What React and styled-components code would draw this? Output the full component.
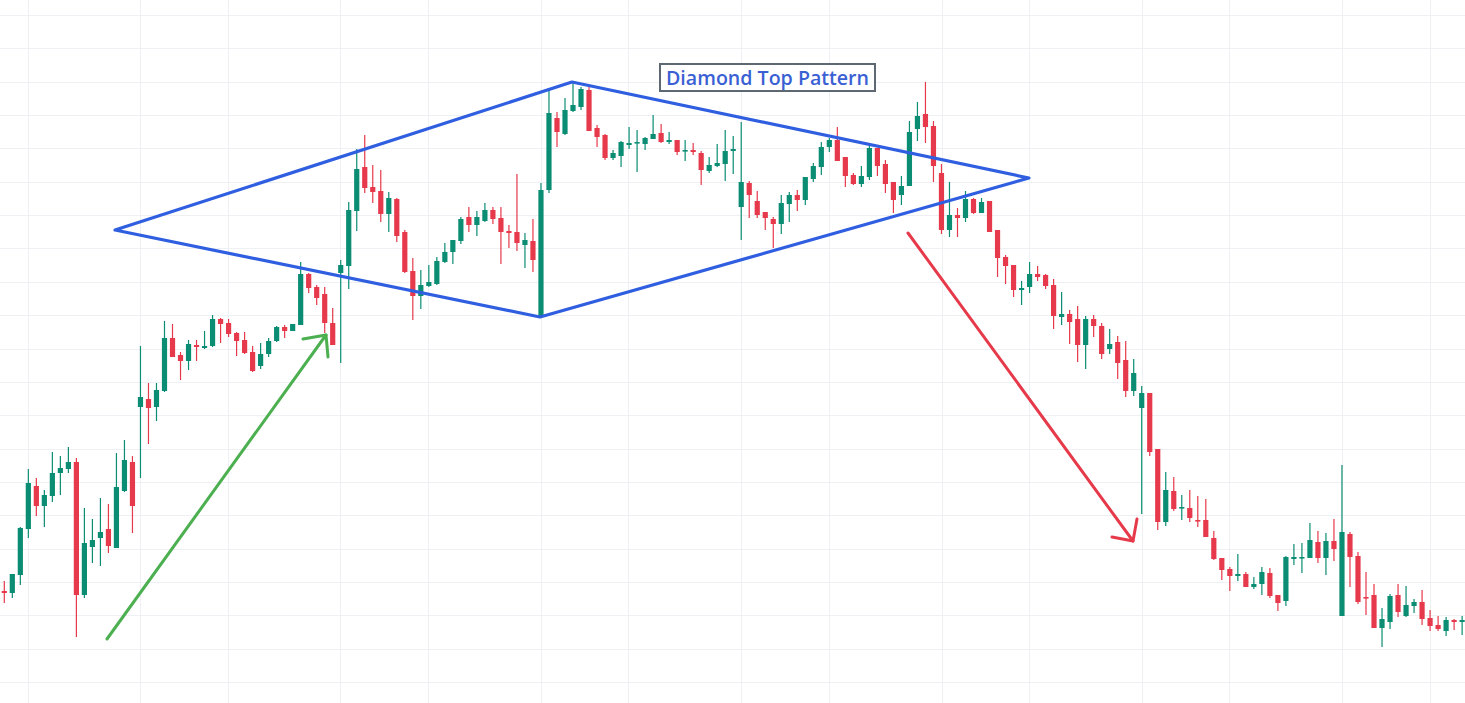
import React from "react";
import styled, { createGlobalStyle } from "styled-components";

const GlobalStyle = createGlobalStyle`
  html, body {
    margin: 0;
    padding: 0;
    background: #ffffff;
    overflow: hidden;
  }
`;

const W = 1465;
const H = 703;
const STEP = 8.01;
const X0 = 4.3;

const UP = "#0b8d74";
const DOWN = "#e6394b";
const GRID = "#eef0f4";
const PATTERN = "#2f5fe0";

// [colour, wickTop, bodyTop, bodyBottom, wickBottom] in screen px
const candles = [
  ["r", 581, 591, 593, 603], ["g", 574, 574, 593, 598], ["g", 527, 528, 575, 585],
  ["g", 469, 483, 529, 538], ["r", 478, 486, 506, 516], ["g", 490, 495, 506, 527],
  ["g", 452, 473, 496, 502], ["g", 456, 468, 473, 495], ["g", 447, 462, 469, 473],
  ["r", 458, 462, 595, 637], ["g", 508, 543, 595, 598], ["g", 519, 540, 547, 563],
  ["g", 498, 532, 538, 566], ["r", 504, 529, 546, 553], ["g", 453, 487, 548, 548],
  ["g", 440, 460, 491, 492], ["r", 456, 462, 506, 533], ["g", 346, 397, 407, 478],
  ["r", 383, 399, 408, 444], ["g", 383, 390, 407, 421], ["g", 321, 338, 391, 392],
  ["r", 324, 338, 357, 357], ["r", 352, 355, 361, 380], ["g", 340, 344, 361, 370],
  ["r", 340, 345, 347, 361], ["g", 331, 346, 348, 349], ["g", 315, 319, 346, 347],
  ["r", 318, 319, 324, 343], ["r", 319, 323, 334, 337], ["r", 332, 333, 341, 356],
  ["r", 332, 340, 353, 354], ["r", 346, 352, 371, 372], ["g", 343, 354, 366, 369],
  ["g", 338, 341, 354, 357], ["g", 326, 327, 341, 342], ["r", 325, 327, 331, 338],
  ["g", 324, 324, 331, 331], ["g", 262, 274, 325, 325], ["r", 273, 274, 288, 293],
  ["r", 285, 287, 298, 305], ["r", 287, 294, 323, 333], ["r", 308, 323, 345, 345],
  ["g", 260, 265, 273, 363], ["g", 202, 210, 266, 289], ["g", 149, 169, 211, 231],
  ["r", 135, 167, 188, 193], ["r", 165, 187, 192, 203], ["r", 170, 191, 214, 222],
  ["g", 192, 198, 214, 232], ["r", 198, 199, 236, 242], ["r", 230, 232, 272, 273],
  ["r", 258, 271, 296, 320], ["g", 270, 285, 296, 309], ["g", 265, 282, 286, 287],
  ["g", 257, 261, 284, 285], ["g", 243, 252, 262, 263], ["g", 240, 240, 252, 264],
  ["g", 217, 219, 241, 244], ["r", 207, 217, 225, 232], ["g", 211, 217, 225, 236],
  ["g", 203, 210, 221, 222], ["r", 207, 210, 219, 224], ["r", 207, 218, 232, 264],
  ["r", 225, 231, 233, 248], ["r", 174, 232, 243, 251], ["g", 233, 240, 245, 268],
  ["r", 219, 241, 260, 272], ["g", 183, 190, 317, 317], ["g", 90, 113, 190, 193],
  ["r", 112, 118, 132, 147], ["g", 98, 110, 134, 135], ["g", 83, 105, 111, 112],
  ["g", 87, 89, 107, 110], ["r", 87, 90, 131, 131], ["r", 125, 128, 137, 147],
  ["r", 134, 135, 158, 160], ["g", 150, 153, 158, 160], ["g", 141, 142, 156, 167],
  ["g", 127, 143, 145, 149], ["g", 130, 142, 143, 172], ["g", 137, 138, 144, 150],
  ["g", 115, 134, 139, 139], ["r", 124, 133, 142, 143], ["g", 132, 140, 142, 144],
  ["r", 140, 140, 152, 155], ["g", 140, 150, 151, 161], ["r", 143, 150, 152, 155],
  ["r", 151, 153, 170, 185], ["g", 157, 165, 171, 173], ["g", 144, 163, 166, 167],
  ["g", 130, 151, 164, 181], ["g", 136, 149, 151, 174], ["g", 122, 182, 207, 240],
  ["r", 181, 183, 195, 218], ["r", 191, 201, 215, 218], ["r", 212, 212, 218, 230],
  ["r", 217, 219, 224, 248], ["g", 195, 203, 224, 234], ["g", 192, 195, 204, 222],
  ["r", 190, 195, 200, 211], ["g", 177, 177, 200, 205], ["g", 163, 166, 179, 182],
  ["g", 142, 147, 167, 175], ["g", 138, 140, 147, 152], ["r", 127, 140, 161, 161],
  ["r", 157, 157, 176, 187], ["r", 173, 175, 184, 185], ["g", 166, 176, 184, 187],
  ["g", 146, 148, 177, 180], ["r", 148, 148, 166, 176], ["r", 160, 164, 184, 193],
  ["r", 182, 182, 200, 213], ["g", 176, 186, 195, 205], ["g", 121, 132, 186, 186],
  ["g", 102, 116, 129, 141], ["r", 82, 114, 127, 143], ["r", 121, 126, 166, 182],
  ["r", 164, 173, 230, 234], ["g", 182, 215, 230, 237], ["r", 208, 215, 218, 237],
  ["g", 191, 199, 218, 222], ["r", 198, 199, 213, 214], ["g", 198, 202, 213, 213],
  ["r", 201, 201, 232, 232], ["r", 230, 230, 258, 277], ["r", 255, 257, 266, 284],
  ["r", 265, 265, 290, 297], ["g", 281, 288, 290, 305], ["g", 262, 274, 287, 293],
  ["r", 266, 274, 277, 281], ["r", 274, 275, 286, 289], ["r", 279, 285, 316, 329],
  ["g", 292, 314, 317, 325], ["r", 310, 314, 322, 344], ["r", 306, 319, 345, 362],
  ["g", 316, 319, 345, 369], ["r", 315, 319, 326, 337], ["r", 323, 326, 354, 359],
  ["g", 329, 344, 349, 354], ["r", 336, 342, 363, 379], ["r", 341, 360, 391, 397],
  ["g", 359, 373, 391, 396], ["g", 386, 393, 408, 514], ["r", 393, 393, 452, 456],
  ["r", 449, 449, 522, 530], ["g", 472, 490, 522, 526], ["r", 477, 491, 509, 511],
  ["g", 495, 507, 508, 520], ["r", 490, 508, 518, 522], ["r", 496, 520, 521, 527],
  ["r", 499, 520, 537, 537], ["r", 531, 538, 559, 560], ["r", 558, 558, 570, 580],
  ["r", 567, 569, 576, 591], ["g", 554, 574, 576, 581], ["r", 572, 574, 587, 587],
  ["g", 577, 584, 587, 589], ["g", 567, 572, 584, 595], ["r", 568, 573, 596, 598],
  ["r", 595, 595, 603, 611], ["g", 556, 557, 601, 606], ["g", 544, 557, 559, 565],
  ["g", 543, 557, 558, 573], ["g", 523, 540, 558, 558], ["r", 531, 542, 558, 563],
  ["g", 533, 541, 558, 575], ["r", 519, 541, 549, 561], ["g", 465, 532, 616, 616],
  ["r", 532, 534, 557, 587], ["r", 552, 556, 602, 604], ["r", 572, 597, 598, 615],
  ["r", 584, 595, 628, 628], ["g", 608, 619, 628, 647], ["g", 594, 596, 622, 629],
  ["r", 584, 595, 612, 617], ["g", 586, 605, 616, 617], ["g", 599, 602, 606, 613],
  ["r", 590, 602, 619, 625], ["r", 610, 618, 626, 631], ["r", 616, 625, 629, 631],
  ["g", 617, 620, 631, 636], ["r", 619, 620, 622, 630], ["g", 616, 620, 622, 635],
];

const verticalGrid = [28, 140, 228, 340, 428, 541, 628, 741, 829, 942, 1029, 1142, 1229, 1342, 1430];
const horizontalGrid = Array.from({ length: 21 }, (_, k) => 15 + 33.35 * k);

// diamond vertices: left, top, right, bottom
const diamond = "115,230 572,82 1029,178 540,317";

const Page = styled.div`
  position: relative;
  width: ${W}px;
  height: ${H}px;
  background: #ffffff;
  overflow: hidden;
`;

const ChartSvg = styled.svg`
  display: block;
  width: ${W}px;
  height: ${H}px;
`;

const PatternLabel = styled.div`
  position: absolute;
  left: 659px;
  top: 63px;
  width: 217px;
  height: 29px;
  box-sizing: border-box;
  display: flex;
  align-items: center;
  justify-content: center;
  background: #ffffff;
  border: 2px solid #5d6872;
  color: #3a60d4;
  font-family: "Open Sans", "Noto Sans", sans-serif;
  font-weight: 600;
  font-size: 19.6px;
  white-space: nowrap;
`;

function Candle({ index, data }) {
  const [c, wt, bt, bb, wb] = data;
  const x = X0 + STEP * index;
  const color = c === "g" ? UP : DOWN;
  const bodyH = Math.max(bb - bt, 1.6);
  return (
    <g fill={color}>
      <rect x={x - 0.6} y={wt} width={1.2} height={Math.max(wb - wt, 1)} />
      <rect x={x - 2.6} y={bt} width={5.2} height={bodyH} />
    </g>
  );
}

function Arrow({ from, to, head, color }) {
  const [x1, y1] = from;
  const [x2, y2] = to;
  return (
    <g stroke={color} strokeWidth="3" strokeLinecap="round" strokeLinejoin="round" fill="none">
      <line x1={x1} y1={y1} x2={x2} y2={y2} />
      <polyline points={`${head[0][0]},${head[0][1]} ${x2},${y2} ${head[1][0]},${head[1][1]}`} />
    </g>
  );
}

export default function App() {
  return (
    <Page>
      <GlobalStyle />
      <ChartSvg viewBox={`0 0 ${W} ${H}`} xmlns="http://www.w3.org/2000/svg">
        <g stroke={GRID} strokeWidth="1">
          {verticalGrid.map((x) => (
            <line key={"v" + x} x1={x + 0.5} y1={0} x2={x + 0.5} y2={H} />
          ))}
          {horizontalGrid.map((y) => (
            <line key={"h" + y} x1={0} y1={Math.round(y) + 0.5} x2={W} y2={Math.round(y) + 0.5} />
          ))}
        </g>
        {candles.map((d, i) => (
          <Candle key={i} index={i} data={d} />
        ))}
        <polygon
          points={diamond}
          fill="none"
          stroke={PATTERN}
          strokeWidth="3.2"
          strokeLinejoin="round"
        />
        <Arrow from={[107, 639]} to={[326, 335]} head={[[303, 339], [328, 357]]} color="#4caf50" />
        <Arrow from={[908, 233]} to={[1133, 541]} head={[[1112, 537], [1137, 519]]} color="#e63a4b" />
      </ChartSvg>
      <PatternLabel>Diamond Top Pattern</PatternLabel>
    </Page>
  );
}
